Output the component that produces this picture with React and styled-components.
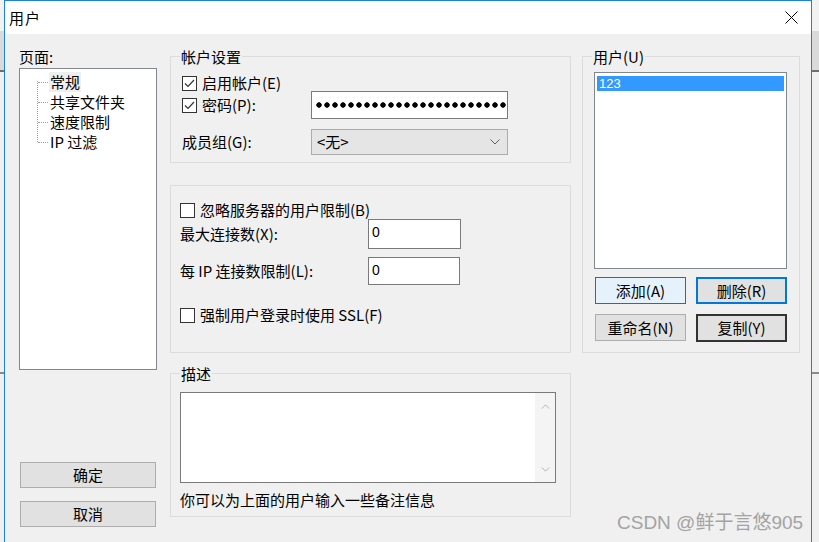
import React from "react";
import styled, { createGlobalStyle, css } from "styled-components";

const Global = createGlobalStyle`
  html, body { margin: 0; padding: 0; overflow: hidden; }
  body {
    font-family: "Noto Sans CJK SC", "Noto Sans", sans-serif;
    font-size: 15px;
    color: #000;
  }
`;

const Page = styled.div`
  position: relative;
  width: 819px;
  height: 542px;
  overflow: hidden;
  padding-left: 4px;
  box-sizing: border-box;
  background: linear-gradient(
    to bottom,
    #f2f2f2 0 31px,
    #dadada 31px 70px,
    #6e6e6e 70px 72px,
    #f0f0f0 72px 372px,
    #8a8a8a 372px 374px,
    #f0f0f0 374px
  );
`;

const Dialog = styled.div`
  width: 808px;
  height: 560px;
  box-sizing: border-box;
  border: 1px solid #1883d7;
  border-bottom: none;
  background: #f0f0f0;
  display: flex;
  flex-direction: column;
`;

const TitleBar = styled.div`
  height: 33px;
  background: #fff;
  display: flex;
  align-items: center;
  justify-content: space-between;
  padding: 0 13px 0 4px;
  flex-shrink: 0;
`;

const Title = styled.span`
  font-size: 15px;
  line-height: 20px;
  letter-spacing: 1px;
`;

const Body = styled.div`
  display: grid;
  grid-template-columns: 140px 401px 218px;
  column-gap: 11px;
  padding: 13px 0 0 14px;
  align-items: start;
`;

const LeftCol = styled.div`
  display: flex;
  flex-direction: column;
`;

const Caption = styled.div`
  line-height: 20px;
  height: 20px;
`;

const TreeBox = styled.div`
  margin-top: 1px;
  width: 138px;
  height: 302px;
  box-sizing: border-box;
  background: #fff;
  border: 1px solid #828790;
`;

const TreeList = styled.div`
  position: relative;
  padding: 3px 0 0 30px;
  &::before {
    content: "";
    position: absolute;
    left: 17px;
    top: 12px;
    height: 61px;
    border-left: 1px dotted #a0a0a0;
  }
`;

const TreeItem = styled.div`
  position: relative;
  height: 20px;
  line-height: 20px;
  &::before {
    content: "";
    position: absolute;
    left: -12px;
    top: 10px;
    width: 10px;
    border-top: 1px dotted #a0a0a0;
  }
`;

const TreeLabel = styled.span`
  display: inline-block;
  margin-left: -1px;
  padding: 0 1px;
  background: ${(p) => (p.$selected ? "#efefef" : "transparent")};
`;

const Button = styled.button`
  font-family: inherit;
  font-size: 15px;
  color: #000;
  padding: 0;
  box-sizing: border-box;
  height: ${(p) => p.$h || 26}px;
  background: #e1e1e1;
  border: 1px solid #adadad;
  line-height: 20px;
  ${(p) =>
    p.$variant === "hover" &&
    css`
      background: #e5f1fb;
      border: 1px solid #0078d7;
    `}
  ${(p) =>
    p.$variant === "focus" &&
    css`
      border: 2px solid #0078d7;
    `}
  ${(p) =>
    p.$variant === "default" &&
    css`
      border: 2px solid #333;
    `}
`;

const LeftButton = styled(Button)`
  width: 136px;
  margin-left: 1px;
  margin-top: ${(p) => p.$mt}px;
`;

const MidCol = styled.div`
  display: flex;
  flex-direction: column;
  padding-top: 9px;
`;

const Group = styled.div`
  position: relative;
  box-sizing: border-box;
  height: ${(p) => p.$h}px;
  margin-top: ${(p) => p.$mt || 0}px;
  border: 1px solid #dcdcdc;
  padding: ${(p) => p.$pad};
  display: flex;
  flex-direction: column;
`;

const Legend = styled.div`
  position: absolute;
  left: 9px;
  top: -10px;
  padding: 0 1px;
  line-height: 20px;
  background: #f0f0f0;
`;

const Row = styled.div`
  display: flex;
  align-items: center;
  height: ${(p) => p.$h}px;
  margin-top: ${(p) => p.$mt || 0}px;
`;

const FieldLabel = styled.div`
  width: ${(p) => p.$w}px;
  flex-shrink: 0;
  line-height: 20px;
`;

const CheckWrap = styled.label`
  display: flex;
  align-items: center;
  gap: 5px;
  line-height: 20px;
`;

const Box = styled.span`
  width: 15px;
  height: 15px;
  box-sizing: border-box;
  border: 1px solid #333;
  background: #fff;
  display: flex;
  align-items: center;
  justify-content: center;
`;

const TextBox = styled.div`
  box-sizing: border-box;
  width: ${(p) => p.$w}px;
  height: ${(p) => p.$h}px;
  background: #fff;
  border: 1px solid #7a7a7a;
  padding: 2px 3px;
  font-family: "Liberation Sans", Arial, sans-serif;
  font-size: 14px;
  line-height: 20px;
  display: flex;
  align-items: ${(p) => (p.$center ? "center" : "flex-start")};
  overflow: hidden;
`;

const Dots = styled.span`
  display: block;
  width: 192px;
  flex-shrink: 0;
  height: 8px;
  background: radial-gradient(circle at 4px 4px, #000 2.4px, transparent 3px) 0 0 / 8px 8px repeat-x;
`;

const Select = styled.div`
  box-sizing: border-box;
  width: 197px;
  height: 26px;
  background: #e5e5e5;
  border: 1px solid #acacac;
  display: flex;
  align-items: center;
  justify-content: space-between;
  padding: 0 7px 0 5px;
  line-height: 20px;
`;

const Memo = styled.div`
  box-sizing: border-box;
  width: 376px;
  height: 91px;
  background: #fff;
  border: 1px solid #7a7a7a;
  display: flex;
  justify-content: flex-end;
`;

const ScrollBar = styled.div`
  width: 20px;
  background: #f4f4f4;
  display: flex;
  flex-direction: column;
  justify-content: space-between;
  align-items: center;
  padding: 11px 0 10px;
`;

const Hint = styled.div`
  margin-top: 7px;
  line-height: 20px;
`;

const RightCol = styled.div`
  padding-top: 9px;
`;

const ListBox = styled.div`
  box-sizing: border-box;
  width: 193px;
  height: 197px;
  background: #fff;
  border: 1px solid #828790;
  padding: 3px 2px;
`;

const ListItem = styled.div`
  height: 15px;
  line-height: 15px;
  padding-left: 2px;
  font-family: "Liberation Sans", Arial, sans-serif;
  font-size: 13px;
  background: ${(p) => (p.$selected ? "#3399ff" : "transparent")};
  color: ${(p) => (p.$selected ? "#fff" : "#000")};
`;

const ButtonGrid = styled.div`
  display: grid;
  grid-template-columns: 91px 91px;
  column-gap: 10px;
  row-gap: 10px;
  margin: 8px 0 0 1px;
`;

const Watermark = styled.div`
  position: absolute;
  left: 617px;
  top: 511px;
  font-size: 19px;
  line-height: 24px;
  color: #a3a3a3;
  white-space: nowrap;
  font-family: "Liberation Sans", "Noto Sans CJK SC", sans-serif;
`;

const Check = ({ checked }) => (
  <Box>
    {checked && (
      <svg width="13" height="13" viewBox="0 0 13 13">
        <path d="M2 6.5 L5 9.5 L11 3" fill="none" stroke="#333" strokeWidth="1.2" />
      </svg>
    )}
  </Box>
);

const Chevron = ({ up, color = "#555", w = 10, h = 6 }) => (
  <svg width={w} height={h} viewBox="0 0 10 6">
    <path
      d={up ? "M0.5 5.5 L5 1 L9.5 5.5" : "M0.5 0.5 L5 5 L9.5 0.5"}
      fill="none"
      stroke={color}
      strokeWidth="1"
    />
  </svg>
);

export default function App() {
  return (
    <>
      <Global />
      <Page>
        <Dialog>
          <TitleBar>
            <Title>用户</Title>
            <svg width="13" height="13" viewBox="0 0 13 13">
              <path d="M0.5 0.5 L12.5 12.5 M12.5 0.5 L0.5 12.5" stroke="#000" strokeWidth="1" />
            </svg>
          </TitleBar>
          <Body>
            <LeftCol>
              <Caption>页面:</Caption>
              <TreeBox>
                <TreeList>
                  <TreeItem>
                    <TreeLabel $selected>常规</TreeLabel>
                  </TreeItem>
                  <TreeItem>
                    <TreeLabel>共享文件夹</TreeLabel>
                  </TreeItem>
                  <TreeItem>
                    <TreeLabel>速度限制</TreeLabel>
                  </TreeItem>
                  <TreeItem>
                    <TreeLabel>IP 过滤</TreeLabel>
                  </TreeItem>
                </TreeList>
              </TreeBox>
              <LeftButton $mt={92}>确定</LeftButton>
              <LeftButton $mt={13}>取消</LeftButton>
            </LeftCol>

            <MidCol>
              <Group $h={107} $pad="18px 0 0 11px">
                <Legend>帐户设置</Legend>
                <Row $h={16}>
                  <CheckWrap>
                    <Check checked />
                    启用帐户(E)
                  </CheckWrap>
                </Row>
                <Row $h={28}>
                  <FieldLabel $w={129}>
                    <CheckWrap>
                      <Check checked />
                      密码(P):
                    </CheckWrap>
                  </FieldLabel>
                  <TextBox $w={197} $h={28} $center>
                    <Dots />
                  </TextBox>
                </Row>
                <Row $h={26} $mt={10}>
                  <FieldLabel $w={129}>成员组(G):</FieldLabel>
                  <Select>
                    <span>&lt;无&gt;</span>
                    <Chevron color="#606060" />
                  </Select>
                </Row>
              </Group>

              <Group $h={168} $mt={22} $pad="16px 0 0 9px">
                <Row $h={16}>
                  <CheckWrap>
                    <Check />
                    忽略服务器的用户限制(B)
                  </CheckWrap>
                </Row>
                <Row $h={30} $mt={1}>
                  <FieldLabel $w={188}>最大连接数(X):</FieldLabel>
                  <TextBox $w={93} $h={30}>0</TextBox>
                </Row>
                <Row $h={28} $mt={8}>
                  <FieldLabel $w={188}>每 IP 连接数限制(L):</FieldLabel>
                  <TextBox $w={92} $h={28}>0</TextBox>
                </Row>
                <Row $h={16} $mt={22}>
                  <CheckWrap>
                    <Check />
                    强制用户登录时使用 SSL(F)
                  </CheckWrap>
                </Row>
              </Group>

              <Group $h={144} $mt={20} $pad="18px 0 0 9px">
                <Legend>描述</Legend>
                <Memo>
                  <ScrollBar>
                    <Chevron up color="#a8a8a8" w={9} h={5} />
                    <Chevron color="#a8a8a8" w={9} h={5} />
                  </ScrollBar>
                </Memo>
                <Hint>你可以为上面的用户输入一些备注信息</Hint>
              </Group>
            </MidCol>

            <RightCol>
              <Group $h={297} $pad="15px 0 0 11px">
                <Legend>用户(U)</Legend>
                <ListBox>
                  <ListItem $selected>123</ListItem>
                </ListBox>
                <ButtonGrid>
                  <Button $h={27} $variant="hover">添加(A)</Button>
                  <Button $h={27} $variant="focus">删除(R)</Button>
                  <Button $h={27}>重命名(N)</Button>
                  <Button $h={28} $variant="default">复制(Y)</Button>
                </ButtonGrid>
              </Group>
            </RightCol>
          </Body>
        </Dialog>
        <Watermark>CSDN @鲜于言悠905</Watermark>
      </Page>
    </>
  );
}
